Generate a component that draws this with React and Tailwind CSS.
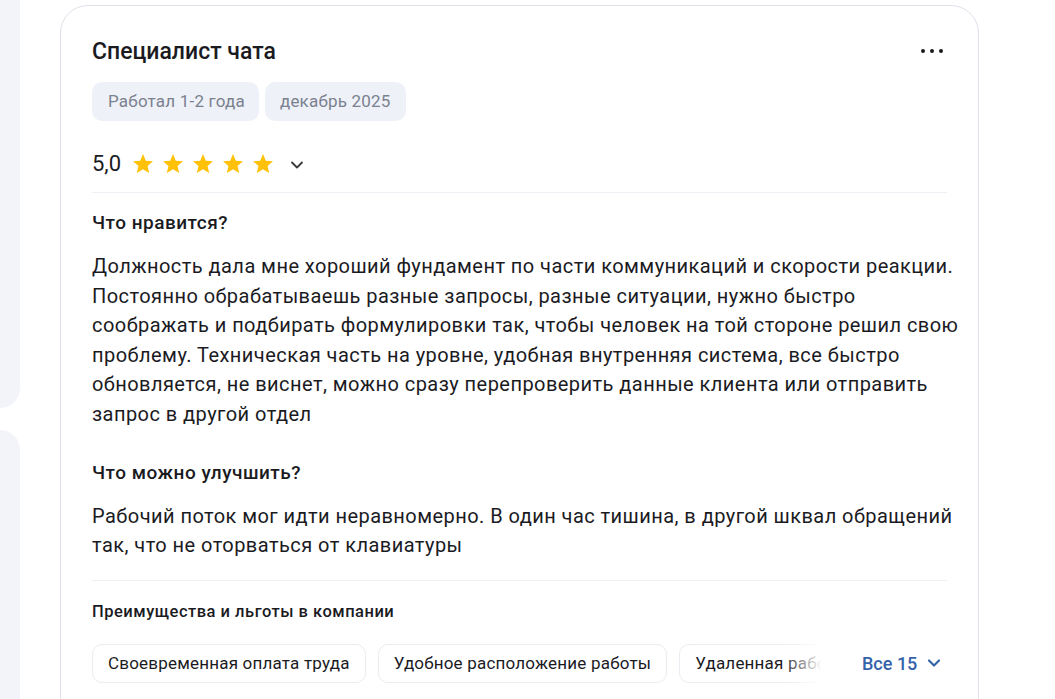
import React from 'react';

const benefits = ['Своевременная оплата труда', 'Удобное расположение работы', 'Удаленная работа', 'ДМС'];

function Star() {
  return (
    <svg width="24" height="24" viewBox="0 0 24 24" className="shrink-0">
      <path fill="#ffc107" d="M12 17.27L18.18 21l-1.64-7.03L22 9.24l-7.19-.61L12 2 9.19 8.63 2 9.24l5.46 4.73L5.82 21z" />
    </svg>
  );
}

function Chevron({ color = '#3a3a3a', size = 20, width = 2.2 }) {
  return (
    <svg width={size} height={size} viewBox="0 0 24 24" fill="none" stroke={color} strokeWidth={width} strokeLinecap="round" strokeLinejoin="round">
      <polyline points="6 9 12 15 18 9" />
    </svg>
  );
}

export default function App() {
  return (
    <div className="flex h-[699px] overflow-hidden bg-white font-['Roboto',sans-serif] text-[#1b1b1f]">
      {/* left column, cut off */}
      <div className="flex w-[20px] shrink-0 flex-col gap-[22px]">
        <div className="h-[408px] rounded-br-[20px] bg-[#f3f4f9]" />
        <div className="flex-1 rounded-tr-[20px] bg-[#f3f4f9]" />
      </div>

      <div className="ml-[40px] mt-[5px] w-[919px] shrink-0 self-start rounded-[28px] border border-[#dde1ea] px-[31px] pt-[31px] pb-10">
        <div className="flex items-start justify-between">
          <h1 className="text-[23px] font-medium leading-[30px]">Специалист чата</h1>
          <button className="mr-[4px] mt-[12px] flex items-center gap-[5px]">
            <span className="h-[4px] w-[4px] rounded-full bg-[#1b1b1f]" />
            <span className="h-[4px] w-[4px] rounded-full bg-[#1b1b1f]" />
            <span className="h-[4px] w-[4px] rounded-full bg-[#1b1b1f]" />
          </button>
        </div>

        <div className="mt-[15px] flex gap-[6px]">
          <span className="flex h-[39px] items-center rounded-[10px] bg-[#eef1f7] pl-[16px] pr-[14px] text-[17px] tracking-[0.2px] text-[#7b8190]">Работал 1-2 года</span>
          <span className="flex h-[39px] items-center rounded-[10px] bg-[#eef1f7] px-[15px] text-[17px] tracking-[0.2px] text-[#7b8190]">декабрь 2025</span>
        </div>

        <div className="mt-[29px] flex h-[28px] items-center">
          <span className="text-[22px] leading-[28px]">5,0</span>
          <div className="ml-[10px] flex gap-[6px]">
            <Star /><Star /><Star /><Star /><Star />
          </div>
          <span className="ml-[12px] mt-[1px]">
            <Chevron />
          </span>
        </div>

        <div className="mt-[14px] h-px bg-[#eff0f5]" />

        <h2 className="mt-[18px] text-[19px] font-medium leading-[24px] tracking-[0.5px]">Что нравится?</h2>
        <p className="-mr-[14px] mt-[17px] text-[20px] leading-[29.6px] tracking-[0.45px]">
          Должность дала мне хороший фундамент по части коммуникаций и скорости реакции. Постоянно обрабатываешь разные запросы, разные ситуации, нужно быстро соображать и подбирать формулировки так, чтобы человек на той стороне решил свою проблему. Техническая часть на уровне, удобная внутренняя система, все быстро обновляется, не виснет, можно сразу перепроверить данные клиента или отправить запрос в другой отдел
        </p>

        <h2 className="mt-[31px] text-[19px] font-medium leading-[24px] tracking-[0.5px]">Что можно улучшить?</h2>
        <p className="-mr-[14px] mt-[17px] text-[20px] leading-[29.6px] tracking-[0.45px]">
          Рабочий поток мог идти неравномерно. В один час тишина, в другой шквал обращений так, что не оторваться от клавиатуры
        </p>

        <div className="mt-[19px] h-px bg-[#eff0f5]" />

        <h3 className="mt-[20px] text-[16.5px] font-medium leading-[22px] tracking-[0.5px]">Преимущества и льготы в компании</h3>

        <div className="mt-[21px] flex items-center">
          <div className="relative flex w-[730px] gap-[12px] overflow-hidden">
            {benefits.map((b) => (
              <span key={b} className="flex h-[39px] shrink-0 items-center rounded-[10px] border border-[#eaecf2] bg-white px-[15px] text-[17px] tracking-[0.2px]">
                {b}
              </span>
            ))}
            <div className="pointer-events-none absolute right-0 top-0 h-full w-[40px] bg-gradient-to-r from-white/0 to-white" />
          </div>
          <button className="ml-[40px] flex items-center gap-[7px] text-[18px] font-medium text-[#3463aa]">
            Все 15
            <Chevron color="#3463aa" size={20} width={2.6} />
          </button>
        </div>
      </div>
    </div>
  );
}
